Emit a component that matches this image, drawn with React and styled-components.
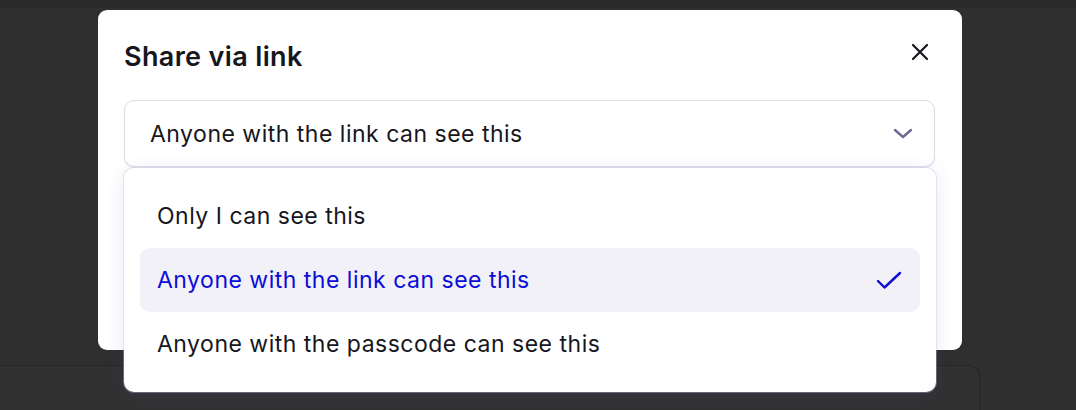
import React, { useState } from 'react'
import styled, { createGlobalStyle } from 'styled-components'

const GlobalStyle = createGlobalStyle`
    html, body {
        margin: 0;
        padding: 0;
        background: #2f2f2f;
        font-family: Inter, "Noto Sans", sans-serif;
        -webkit-font-smoothing: antialiased;
    }
`

const Page = styled.div`
    position: relative;
    width: 1076px;
    height: 410px;
    overflow: hidden;
    background: #2f2f2f;
    display: flex;
    flex-direction: column;
`

const TopBand = styled.div`
    height: 8px;
    background: #2a2a2a;
`

const PageBody = styled.div`
    flex: 1;
    display: flex;
    flex-direction: column;
    justify-content: flex-end;
`

const BackCard = styled.div`
    height: 44px;
    width: 990px;
    margin-left: -12px;
    border: 1px solid #262626;
    border-bottom: none;
    border-radius: 0 12px 0 0;
    background: #313131;
`

const Modal = styled.div`
    position: absolute;
    left: 98px;
    top: 10px;
    width: 864px;
    height: 340px;
    box-sizing: border-box;
    background: #fff;
    border-radius: 9px;
    padding: 30px 26px 0 26px;
    display: flex;
    flex-direction: column;
    gap: 28px;
`

const Header = styled.div`
    display: flex;
    align-items: center;
    justify-content: space-between;
    height: 32px;
`

const Title = styled.h2`
    margin: 0;
    font-size: 27px;
    font-weight: 600;
    color: #16161d;
    letter-spacing: 0.35px;
`

const CloseBtn = styled.button`
    border: none;
    background: transparent;
    padding: 0;
    width: 24px;
    height: 24px;
    margin-right: 4px;
    margin-bottom: 8px;
    display: flex;
    align-items: center;
    justify-content: center;
    cursor: pointer;
`

const SelectWrap = styled.div`
    position: relative;
    width: 811px;
`

const SelectBox = styled.button`
    width: 100%;
    height: 67px;
    box-sizing: border-box;
    border: 1px solid #dddce8;
    border-radius: 10px;
    box-shadow: 0 1px 1px rgba(110, 100, 170, 0.18);
    background: #fff;
    display: flex;
    align-items: center;
    justify-content: space-between;
    padding: 0 21px 0 25px;
    font-family: inherit;
    font-size: 23px;
    letter-spacing: 0.5px;
    color: #16161d;
    cursor: pointer;
`

const Menu = styled.ul`
    position: absolute;
    left: 0;
    top: 68px;
    width: 812px;
    box-sizing: border-box;
    margin: 0;
    padding: 16px 16px 16px 16px;
    list-style: none;
    background: #fff;
    border-radius: 10px;
    box-shadow: 0 0 0 1px rgba(200, 196, 230, 0.35), 0 4px 18px rgba(90, 80, 170, 0.14);
`

const Item = styled.li`
    height: 64px;
    display: flex;
    align-items: center;
    justify-content: space-between;
    padding: 0 18px 0 17px;
    border-radius: 10px;
    font-size: 23px;
    letter-spacing: 0.5px;
    color: ${p => (p.$active ? '#0c0cd6' : '#16161d')};
    background: ${p => (p.$active ? '#f1f1f7' : 'transparent')};
    cursor: pointer;
`

const OPTIONS = [
    'Only I can see this',
    'Anyone with the link can see this',
    'Anyone with the passcode can see this',
]

const CloseIcon = () => (
    <svg width="16" height="16" viewBox="0 0 16 16">
        <path d="M1 1 L15 15 M15 1 L1 15" stroke="#16161d" strokeWidth="2.2" strokeLinecap="round" fill="none" />
    </svg>
)

const Chevron = () => (
    <svg width="20" height="11" viewBox="0 0 20 11">
        <path d="M2 2 L10 9 L18 2" stroke="#6f6a92" strokeWidth="2.4" strokeLinecap="round" strokeLinejoin="round" fill="none" />
    </svg>
)

const Check = () => (
    <svg width="26" height="19" viewBox="0 0 26 19">
        <path d="M2 10 L8.5 16.5 L24 2" stroke="#0c0cd6" strokeWidth="2.4" strokeLinecap="round" strokeLinejoin="round" fill="none" />
    </svg>
)

const App = () => {
    const [selected, setSelected] = useState(1)

    return (
        <>
            <GlobalStyle />
            <Page>
                <TopBand />
                <PageBody>
                    <BackCard />
                </PageBody>
                <Modal>
                    <Header>
                        <Title>Share via link</Title>
                        <CloseBtn aria-label="Close"><CloseIcon /></CloseBtn>
                    </Header>
                    <SelectWrap>
                        <SelectBox>
                            {OPTIONS[selected]}
                            <Chevron />
                        </SelectBox>
                        <Menu>
                            {OPTIONS.map((opt, i) => (
                                <Item key={opt} $active={i === selected} onClick={() => setSelected(i)}>
                                    {opt}
                                    {i === selected && <Check />}
                                </Item>
                            ))}
                        </Menu>
                    </SelectWrap>
                </Modal>
            </Page>
        </>
    )
}

export default App
